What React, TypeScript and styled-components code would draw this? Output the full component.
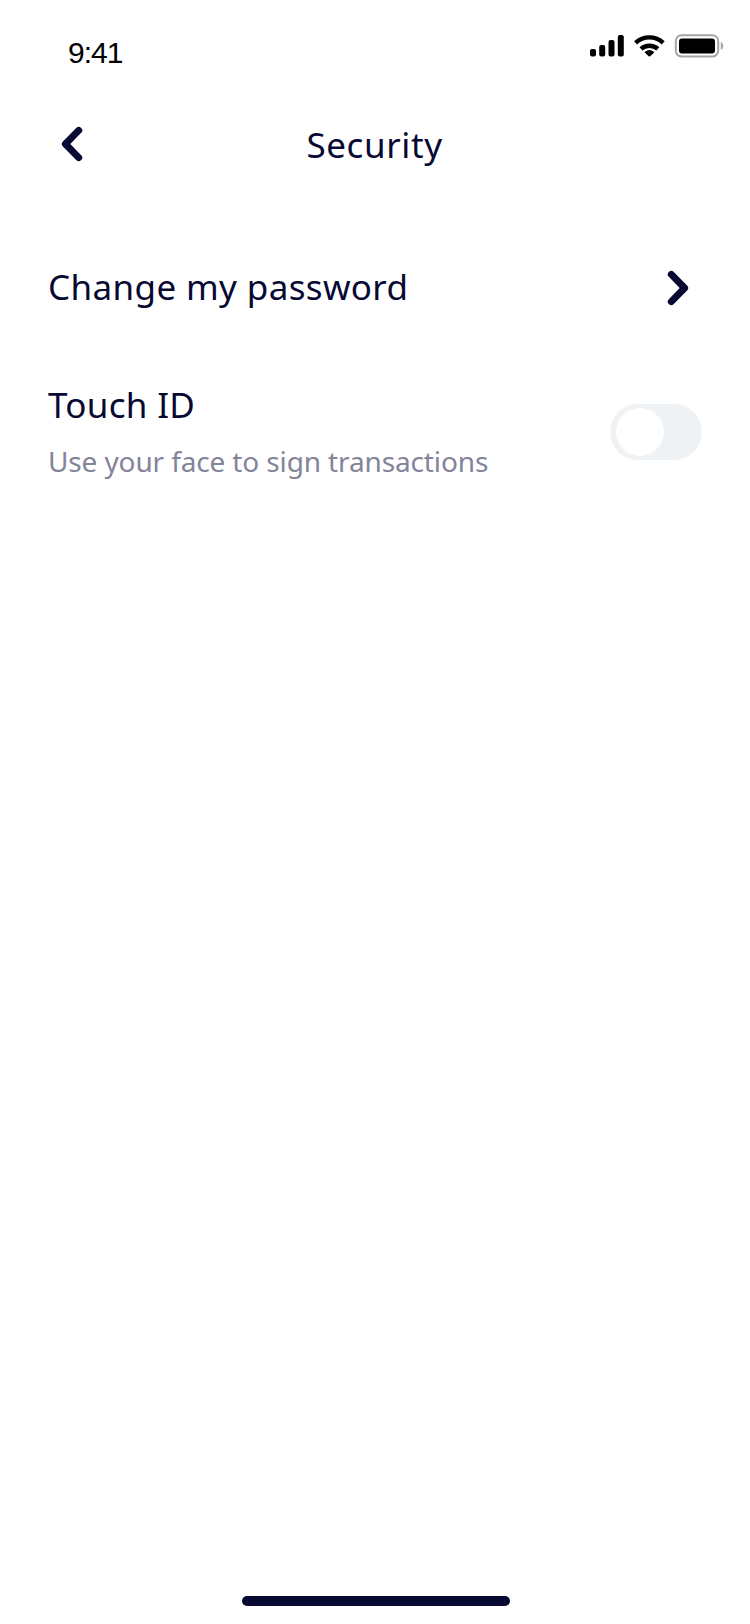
import React, { useState } from "react";
import styled, { createGlobalStyle } from "styled-components";

const navy = "#070933";

const GlobalStyle = createGlobalStyle`
  *, *::before, *::after { box-sizing: border-box; }
  body { margin: 0; background: #fff; }
`;

const Screen = styled.div`
  display: flex;
  flex-direction: column;
  width: 750px;
  height: 1624px;
  background: #fff;
  color: ${navy};
  font-family: "Noto Sans", sans-serif;
`;

const StatusBar = styled.header`
  display: flex;
  justify-content: space-between;
  align-items: flex-start;
  height: 88px;
  padding: 34px 26px 0 68px;
  color: #000;
`;

const Clock = styled.time`
  padding-top: 1px;
  font: 30px/36px "Liberation Sans", sans-serif;
  letter-spacing: -1px;
`;

const StatusIcons = styled.div`
  display: flex;
`;

const NavBar = styled.nav`
  display: grid;
  grid-template-columns: 104px 1fr 104px;
  align-items: center;
  height: 112px;
  padding: 0 21px 0 20px;
`;

const IconButton = styled.button`
  display: flex;
  justify-content: center;
  padding: 0;
  border: 0;
  background: none;
  color: inherit;
`;

const Title = styled.h1<{ $spacing: number }>`
  margin: 0;
  font-size: 35px;
  font-weight: 400;
  line-height: 48px;
  letter-spacing: ${(p) => p.$spacing}px;
  white-space: nowrap;
`;

const NavTitle = styled(Title)`
  padding-top: 2px;
  text-align: center;
`;

const Settings = styled.main`
  flex: 1;
  padding: 32px 48px 0;
`;

const Row = styled.section<{ $height: number }>`
  display: flex;
  align-items: center;
  justify-content: space-between;
  height: ${(p) => p.$height}px;
`;

const RowLabel = styled.div<{ $lift: number }>`
  padding-bottom: ${(p) => p.$lift}px;
`;

const RowIcon = styled.div`
  display: flex;
  padding-right: 12px;
`;

const Description = styled.p`
  margin: 13px 0 0;
  font-size: 28px;
  line-height: 38px;
  letter-spacing: -0.13px;
  color: #83849a;
  white-space: nowrap;
`;

const Switch = styled.button<{ $on: boolean }>`
  display: flex;
  justify-content: ${(p) => (p.$on ? "flex-end" : "flex-start")};
  width: 92px;
  height: 56px;
  padding: 4px 6px;
  border: 0;
  border-radius: 28px;
  background: ${(p) => (p.$on ? navy : "#eef2f5")};
`;

const Knob = styled.span`
  width: 48px;
  height: 48px;
  border-radius: 50%;
  background: #fff;
`;

const HomeArea = styled.footer`
  display: flex;
  justify-content: center;
  padding: 0 0 18px 2px;
`;

const HomeIndicator = styled.div`
  width: 268px;
  height: 10px;
  border-radius: 5px;
  background: ${navy};
`;

const Chevron = ({ left = false }: { left?: boolean }) => (
  <svg width="24" height="38" viewBox="0 0 24 38" fill="none" stroke="currentColor"
    strokeWidth="7" strokeLinecap="round" strokeLinejoin="round">
    <path d={left ? "M18.7 5.4 5.4 19l13.3 13.6" : "M5.3 5.4 18.6 19 5.3 32.6"} />
  </svg>
);

const StatusGlyphs = () => (
  <svg width="134" height="24" viewBox="590 34 134 24">
    <rect x="590" y="49" width="6" height="7.5" rx="2" />
    <rect x="599.2" y="45" width="6" height="11.5" rx="2" />
    <rect x="608.5" y="40" width="6" height="16.5" rx="2" />
    <rect x="617.8" y="35" width="6" height="21.5" rx="2" />
    <g fill="none" stroke="#000" strokeWidth="4.4">
      <path d="M635.6 42.8a20.3 20.3 0 0 1 27.6 0" />
      <path d="M641 48.9a12.6 12.6 0 0 1 16.8 0" />
    </g>
    <path d="M645 51.8a7 7 0 0 1 8.8 0q.6.5.1 1l-3.8 3.5q-.7.6-1.4 0l-3.8-3.5q-.5-.5.1-1z" />
    <rect x="675.8" y="35.2" width="42.4" height="21.2" rx="5.6" fill="none" stroke="#a6a6a6" strokeWidth="2" />
    <rect x="679" y="38.5" width="36" height="15" rx="3" />
    <path d="M720.8 42c3.2 1.3 3.2 6.7 0 8z" fill="#a6a6a6" />
  </svg>
);

export default function App() {
  const [enabled, setEnabled] = useState(false);
  return (
    <>
      <GlobalStyle />
      <Screen>
        <StatusBar>
          <Clock>9:41</Clock>
          <StatusIcons><StatusGlyphs /></StatusIcons>
        </StatusBar>
        <NavBar>
          <IconButton aria-label="Back"><Chevron left /></IconButton>
          <NavTitle $spacing={0.6}>Security</NavTitle>
        </NavBar>
        <Settings>
          <Row $height={112}>
            <RowLabel $lift={2}>
              <Title as="h2" $spacing={0.37}>Change my password</Title>
            </RowLabel>
            <RowIcon><Chevron /></RowIcon>
          </Row>
          <Row $height={176}>
            <RowLabel $lift={4}>
              <Title as="h2" $spacing={0.3}>Touch ID</Title>
              <Description>Use your face to sign transactions</Description>
            </RowLabel>
            <Switch $on={enabled} role="switch" aria-label="Touch ID" aria-checked={enabled}
              onClick={() => setEnabled(!enabled)}>
              <Knob />
            </Switch>
          </Row>
        </Settings>
        <HomeArea><HomeIndicator /></HomeArea>
      </Screen>
    </>
  );
}
